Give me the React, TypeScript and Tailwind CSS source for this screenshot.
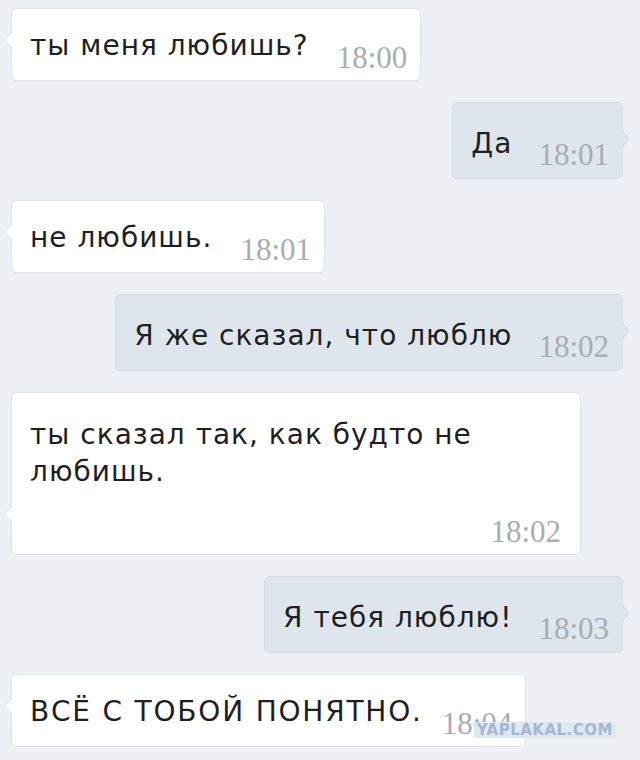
import React from "react";

type Msg = {
  text: React.ReactNode;
  time: string;
  out?: boolean;
  stacked?: boolean;
  caps?: boolean;
};

const messages: Msg[] = [
  { text: "ты меня любишь?", time: "18:00" },
  { text: "Да", time: "18:01", out: true },
  { text: "не любишь.", time: "18:01" },
  { text: "Я же сказал, что люблю", time: "18:02", out: true },
  {
    text: (
      <>
        ты сказал так, как будто не
        <br />
        любишь.
      </>
    ),
    time: "18:02",
    stacked: true,
  },
  { text: "Я тебя люблю!", time: "18:03", out: true },
  { text: "ВСЁ С ТОБОЙ ПОНЯТНО.", time: "18:04", caps: true },
];

const timeCls =
  "font-['Liberation_Serif',serif] text-[31px] leading-[31px] text-[#a7adb5]";
const textCls = "text-[28px] text-[#1f1f1f]";

const Bubble = ({ msg }: { msg: Msg }) => {
  const box = msg.out
    ? "bg-[#dfe5ed] border-[#d4dbe4]"
    : "bg-white border-[#dfe3e9]";
  const track = msg.caps ? "tracking-[1.8px]" : "tracking-[1px]";
  const gap = msg.caps ? "ml-[19px]" : msg.out ? "ml-[26px]" : "ml-[28px]";
  return (
    <div className={`relative rounded-[5px] border ${box} ${msg.stacked ? "w-[570px]" : ""}`}>
      {/* tail */}
      {msg.out ? (
        <div className="absolute -right-[6px] bottom-[33px] w-[12px] h-[12px] rotate-45 rounded-[2px] bg-[#dfe5ed] border-t border-r border-[#d4dbe4]" />
      ) : (
        <div className="absolute -left-[6px] bottom-[34px] w-[12px] h-[12px] rotate-45 rounded-[2px] bg-white border-l border-b border-[#dfe3e9]" />
      )}
      {msg.stacked ? (
        <div className="relative flex flex-col pl-[18px] pr-[19px] pt-[23px] pb-[7px]">
          <span className={`${textCls} ${track} leading-[37px]`}>{msg.text}</span>
          <span className={`self-end mt-[26px] ${timeCls}`}>{msg.time}</span>
        </div>
      ) : (
        <div
          className={`relative flex items-end pl-[18px] pr-[13px] ${
            msg.out ? "pt-[24px] pb-[8px]" : "pt-[20px] pb-[7px]"
          }`}
        >
          <span className={`${textCls} ${track} leading-[34px] ${msg.out ? "mb-[9px]" : "mb-[10px]"}`}>
            {msg.text}
          </span>
          <span className={`${gap} ${timeCls}`}>{msg.time}</span>
        </div>
      )}
    </div>
  );
};

export default function App() {
  return (
    <div className="relative w-[640px] h-[760px] overflow-hidden bg-[#edf0f4] font-['DejaVu_Sans',sans-serif]">
      <div className="flex flex-col gap-[21px] pt-[8px] pl-[11px] pr-[17px]">
        {messages.map((m, i) => (
          <div key={i} className={`flex ${m.out ? "justify-end" : "justify-start"}`}>
            <Bubble msg={m} />
          </div>
        ))}
      </div>
      {/* watermark */}
      <div className="absolute right-[24px] bottom-[22px] px-[3px] bg-[#e1e7ee] text-[15px] leading-[16px] font-bold tracking-[0.5px] text-[#9fb9d7] font-['DejaVu_Sans',sans-serif]">
        YAPLAKAL.COM
      </div>
    </div>
  );
}
